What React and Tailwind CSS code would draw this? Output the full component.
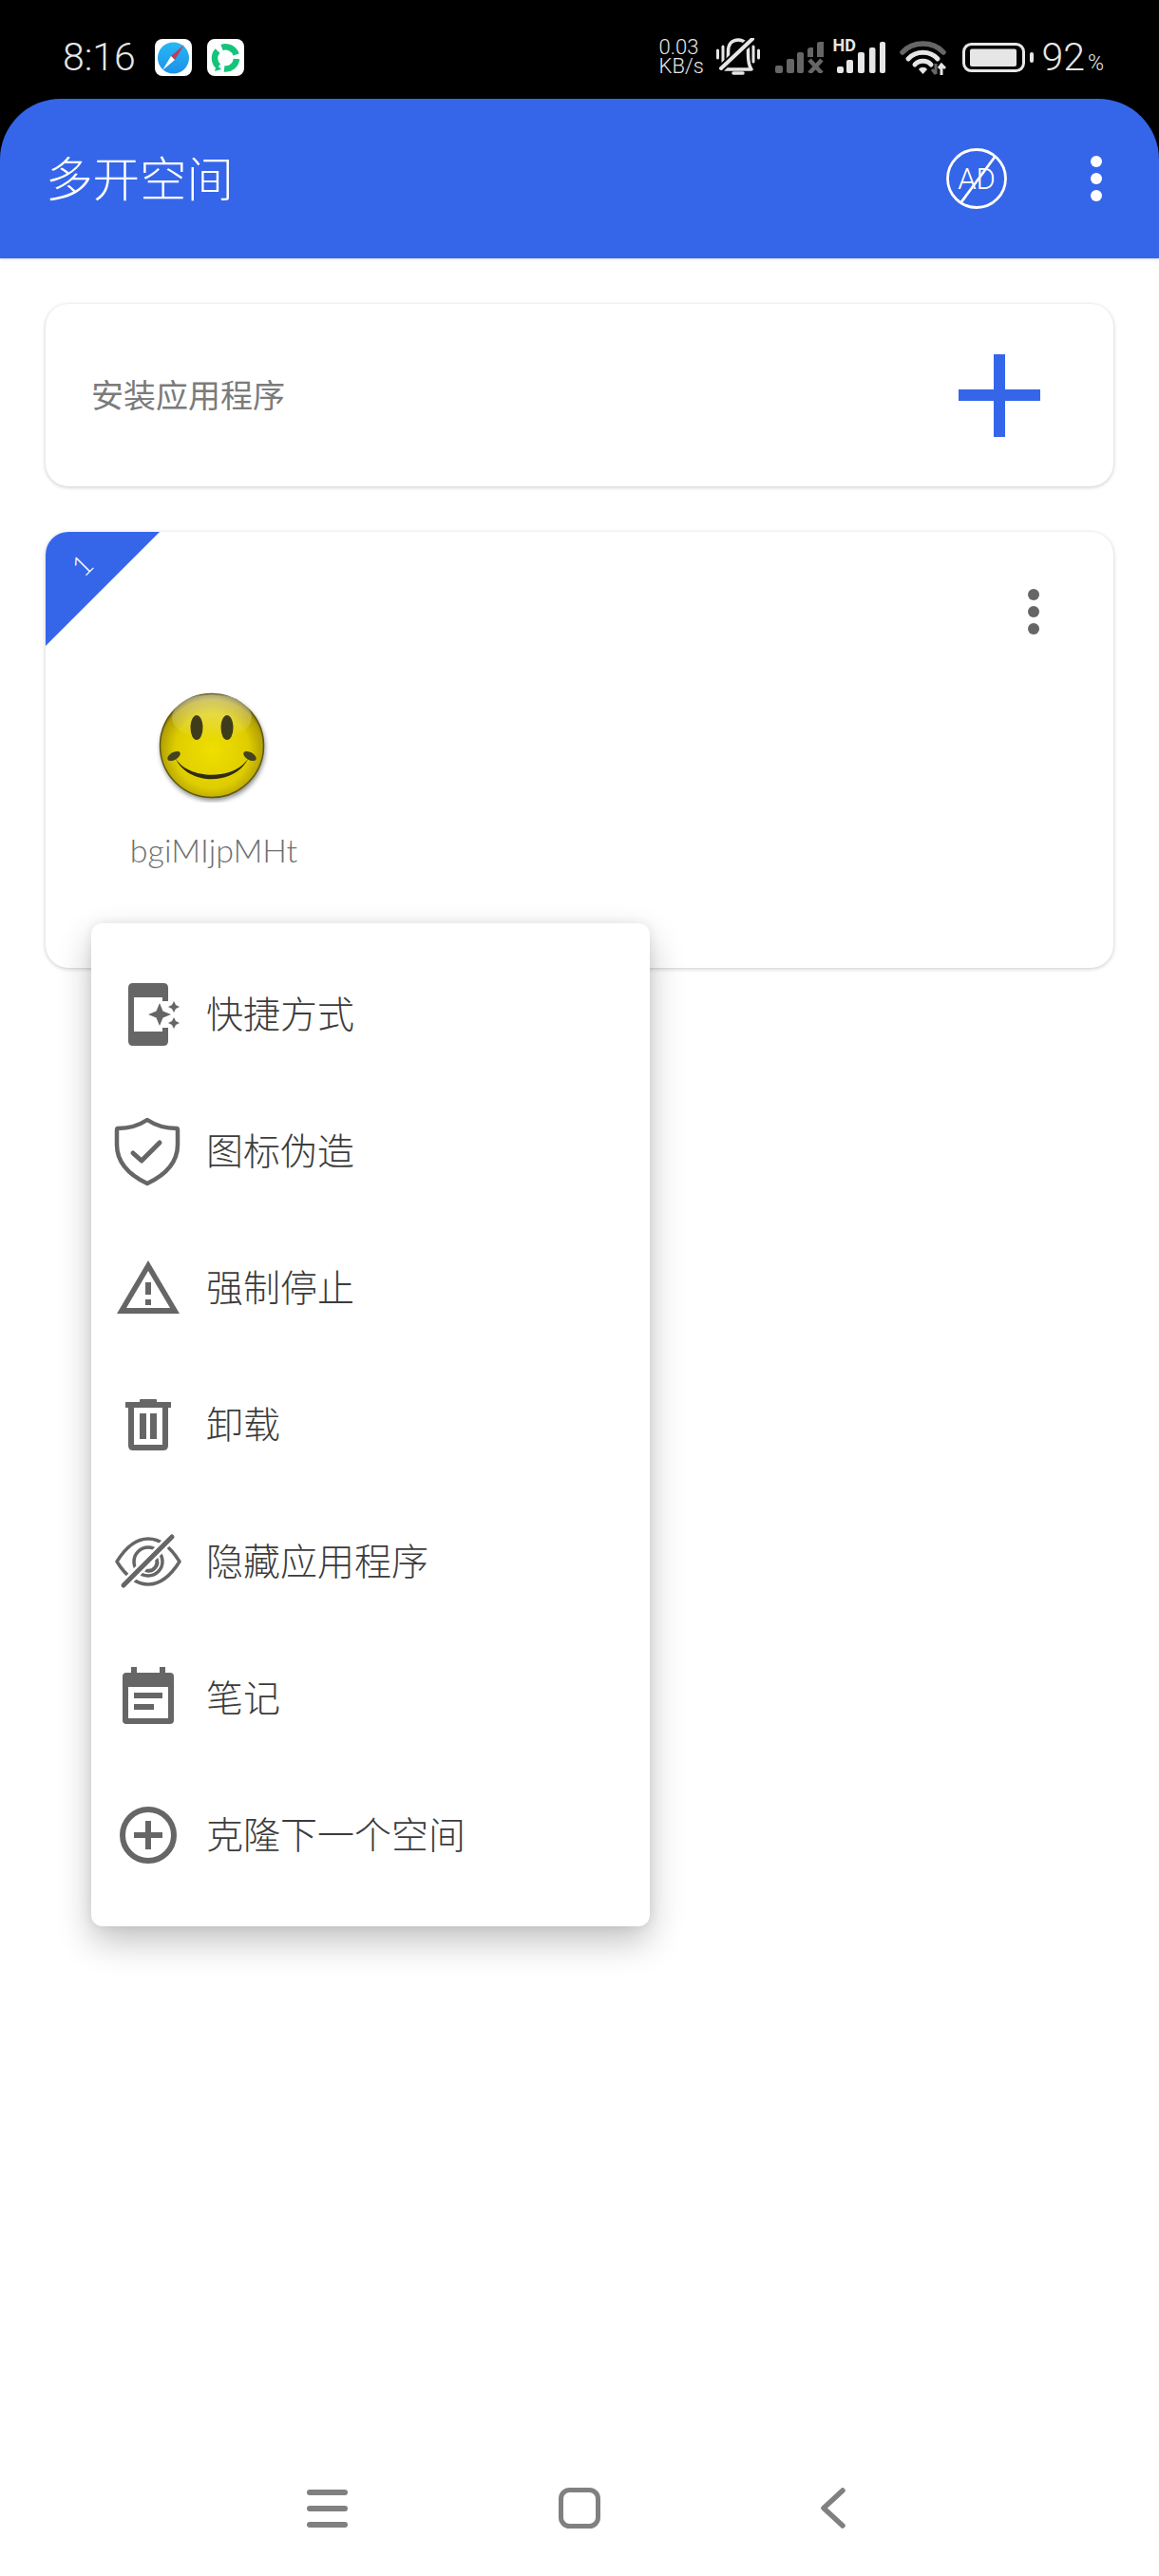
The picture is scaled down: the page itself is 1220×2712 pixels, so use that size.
import React from 'react'

const MENU_GRAY = '#666666'

function Compass() {
  return (
    <svg width="39" height="39" viewBox="0 0 39 39">
      <defs>
        <linearGradient id="sky" x1="0" y1="0" x2="0" y2="1">
          <stop offset="0" stopColor="#27b8f4" />
          <stop offset="1" stopColor="#1e90ea" />
        </linearGradient>
      </defs>
      <rect width="39" height="39" rx="8" fill="#ffffff" />
      <circle cx="19.5" cy="20" r="16.5" fill="url(#sky)" />
      <path d="M31 6 L17 18 L21 22 Z" fill="#c23b5a" />
      <path d="M8 33 L17 18 L21 22 Z" fill="#ffffff" />
    </svg>
  )
}

function GreenSwirl() {
  return (
    <svg width="39" height="39" viewBox="0 0 39 39" fill="none" stroke="#14c47a" strokeWidth="6.5">
      <rect width="39" height="39" rx="8" fill="#ffffff" stroke="none" />
      <path d="M15.5 9 A11.5 11.5 0 0 1 30.5 16.5" />
      <path d="M31 21 A11.5 11.5 0 0 1 18 31.5" />
      <path d="M12 29 A11.5 11.5 0 0 1 11 12.5" />
      <path d="M10 27 L8 34 L15 32 Z" fill="#14c47a" stroke="none" />
    </svg>
  )
}

function MutedBell() {
  return (
    <svg width="48" height="40" viewBox="0 0 48 40" fill="none" stroke="#e6e6e6">
      <path d="M2.5 13 V21 M8 9 V25 M45.5 13 V21 M40 9 V25" strokeWidth="3" strokeLinecap="round" />
      <path d="M10 33 C14 28 13.5 20 13.5 14 C13.5 6 18 2 24 2 C30 2 34.5 6 34.5 14 C34.5 20 34 28 38 33 Z" strokeWidth="3.5" strokeLinejoin="round" />
      <path d="M39 1 L5 33" stroke="#000000" strokeWidth="8" />
      <path d="M39 1 L6 32" strokeWidth="4" strokeLinecap="round" />
      <path d="M19 37 H29" strokeWidth="3.5" strokeLinecap="round" />
    </svg>
  )
}

function NoSimBars() {
  return (
    <svg width="51" height="33" viewBox="0 0 51 33" fill="#666666">
      <rect x="0" y="25" width="8" height="8" rx="2" />
      <rect x="12" y="18" width="8" height="15" rx="2" />
      <rect x="23" y="11" width="7" height="22" rx="2" />
      <path d="M34 9 Q34 6 37 6 H40 V16 H34 Z" />
      <path d="M44 2 Q44 0 47 0 H51 V16 H44 Z" />
      <path d="M36 19 L49 33 M49 19 L36 33" stroke="#666666" strokeWidth="4.5" />
    </svg>
  )
}

function HdBars() {
  return (
    <div className="relative h-[33px] w-[54px]">
      <span className="absolute left-[-1px] top-[-6px] text-[18px] leading-[20px] font-bold text-[#e6e6e6]">HD</span>
      <svg width="54" height="33" viewBox="0 0 54 33" fill="#e6e6e6">
        <rect x="3" y="26" width="7" height="7" rx="2" />
        <rect x="13" y="19" width="7" height="14" rx="2" />
        <rect x="25" y="11" width="7" height="22" rx="2" />
        <rect x="37" y="6" width="6.5" height="27" rx="2" />
        <rect x="48" y="0" width="6" height="33" rx="2" />
      </svg>
    </div>
  )
}

function Wifi() {
  return (
    <svg width="49" height="37" viewBox="0 0 49 37" fill="none">
      <path d="M3 13 C14 1 35 1 46 13" stroke="#666666" strokeWidth="5.5" strokeLinecap="round" />
      <path d="M9 20 C17 11 32 11 40 20" stroke="#e6e6e6" strokeWidth="5" strokeLinecap="round" />
      <path d="M16 26 C20 21 29 21 33 26" stroke="#e6e6e6" strokeWidth="5" strokeLinecap="round" />
      <path d="M20 31 C22 28 27 28 29 31 L24.5 36 Z" fill="#e6e6e6" />
      <path d="M38 25 V36 M34 31 L38 36" stroke="#666666" strokeWidth="3" />
      <path d="M44 37 V27 M41 30 L44 26 L48 30" stroke="#e6e6e6" strokeWidth="3" />
    </svg>
  )
}

function Battery() {
  return (
    <svg width="75" height="31" viewBox="0 0 75 31">
      <rect x="1.5" y="1.5" width="63" height="28" rx="8" fill="none" stroke="#e6e6e6" strokeWidth="3" />
      <rect x="8" y="6.5" width="49" height="18.5" rx="2" fill="#e6e6e6" />
      <rect x="71" y="10" width="4" height="11" rx="2" fill="#e6e6e6" />
    </svg>
  )
}

function StatusBar() {
  return (
    <div className="flex h-[104px] shrink-0 items-start justify-between bg-black pl-[66px] pr-[58px] pt-[40px] text-[#e6e6e6]">
      <div className="flex items-center">
        <span className="w-[97px] text-[41px] leading-[40px] font-light">8:16</span>
        <div className="flex gap-[16px]">
          <Compass />
          <GreenSwirl />
        </div>
      </div>
      <div className="flex items-center">
        <div className="w-[46px] text-[22px] leading-[20px] font-light">
          <div>0.03</div>
          <div>KB/s</div>
        </div>
        <div className="ml-[13px]"><MutedBell /></div>
        <div className="ml-[15px]"><NoSimBars /></div>
        <div className="ml-[11px]"><HdBars /></div>
        <div className="ml-[15px]"><Wifi /></div>
        <div className="ml-[17px]"><Battery /></div>
        <div className="ml-[9px] flex items-baseline font-light">
          <span className="text-[41px] leading-[40px]">92</span>
          <span className="ml-[3px] text-[23px] leading-[24px]">%</span>
        </div>
      </div>
    </div>
  )
}

function VerticalDots({ color }) {
  return (
    <svg width="12" height="48" viewBox="0 0 12 48" fill={color}>
      <circle cx="6" cy="6" r="6" />
      <circle cx="6" cy="24" r="6" />
      <circle cx="6" cy="42" r="6" />
    </svg>
  )
}

function NoAds() {
  return (
    <svg width="64" height="64" viewBox="0 0 64 64" fill="none" stroke="#ffffff">
      <circle cx="32" cy="32" r="30.5" strokeWidth="2.8" />
      <text x="32" y="43" textAnchor="middle" fill="#ffffff" stroke="none" fontSize="31" fontWeight="300" fontFamily="Roboto, sans-serif">AD</text>
      <path d="M52 8 L15 58" strokeWidth="2.8" />
    </svg>
  )
}

function Header() {
  return (
    <div className="bg-black">
      <header className="flex h-[168px] items-center justify-between rounded-t-[64px] bg-[#3566ea] pl-[48px] pr-[60px] shadow-[0_1px_3px_rgba(0,0,0,0.15)]">
        <h1 className="pt-[3px] text-[49.5px] leading-[56px] font-light text-white">多开空间</h1>
        <div className="flex items-center gap-[88px]">
          <NoAds />
          <VerticalDots color="#ffffff" />
        </div>
      </header>
    </div>
  )
}

function Smiley() {
  return (
    <svg width="120" height="120" viewBox="0 0 120 120">
      <defs>
        <radialGradient id="face" cx="0.5" cy="0.55" r="0.55">
          <stop offset="0" stopColor="#efdf00" />
          <stop offset="0.65" stopColor="#dfcd00" />
          <stop offset="0.9" stopColor="#b3a105" />
          <stop offset="1" stopColor="#5f5810" />
        </radialGradient>
        <linearGradient id="gloss" x1="0" y1="0" x2="0" y2="1">
          <stop offset="0" stopColor="#ffffff" stopOpacity="0.45" />
          <stop offset="1" stopColor="#ffffff" stopOpacity="0" />
        </linearGradient>
        <filter id="soft" x="-20%" y="-20%" width="140%" height="140%">
          <feGaussianBlur stdDeviation="2.5" />
        </filter>
      </defs>
      <circle cx="59" cy="63" r="55" fill="#000000" opacity="0.45" filter="url(#soft)" />
      <circle cx="58" cy="60" r="54.5" fill="url(#face)" stroke="#5f5810" strokeWidth="1.5" />
      <ellipse cx="58" cy="30" rx="42" ry="24" fill="url(#gloss)" />
      <ellipse cx="42" cy="41" rx="6.5" ry="13" fill="#3f3c1c" />
      <ellipse cx="74" cy="41" rx="6.5" ry="13" fill="#3f3c1c" />
      <path d="M19 72 C32 103 84 103 97 72 C84 97 32 97 19 72 Z" fill="#2f2c12" />
      <ellipse cx="18" cy="71" rx="7.5" ry="4" fill="#45421f" transform="rotate(-30 18 71)" />
      <ellipse cx="98" cy="71" rx="7.5" ry="4" fill="#45421f" transform="rotate(30 98 71)" />
    </svg>
  )
}

function InstallCard() {
  return (
    <div className="flex h-[192px] items-center justify-between rounded-[24px] bg-white pl-[48px] pr-[77px] shadow-[0_1px_4px_rgba(0,0,0,0.22)]">
      <span className="pt-[2px] text-[34px] leading-[40px] text-[#7b7b7b]">安装应用程序</span>
      <svg width="86" height="87" viewBox="0 0 86 87" fill="#3566ea">
        <rect x="0" y="37" width="86" height="12" />
        <rect x="37" y="0" width="12" height="87" />
      </svg>
    </div>
  )
}

function SpaceCard() {
  return (
    <div className="relative h-[459px] overflow-hidden rounded-[24px] bg-white pt-[60px] shadow-[0_1px_4px_rgba(0,0,0,0.22)]">
      {/* corner ribbon holding the space number */}
      <svg className="absolute left-0 top-0" width="120" height="120" viewBox="0 0 120 120">
        <path d="M0 0 H120 L0 120 Z" fill="#3566ea" />
      </svg>
      <span className="absolute left-[29px] top-[18px] -rotate-45 font-['Lato'] text-[30px] leading-[32px] font-light text-white">1</span>
      <div className="flex justify-end pr-[78px]">
        <VerticalDots color={MENU_GRAY} />
      </div>
      <div className="ml-[89px] mt-[57px] flex w-[176px] flex-col items-center">
        <Smiley />
        <span className="mt-[30px] font-['Lato'] text-[34px] leading-[40px] font-light whitespace-nowrap text-[#6f6f6f]">bgiMIjpMHt</span>
      </div>
    </div>
  )
}

const MENU_ITEMS = [
  {
    label: '快捷方式',
    icon: (
      <>
        <path d="M15 7 Q15 2 20 2 H52 Q57 2 57 7 V21 H51 V17 H21 V53 H51 V49 H57 V63 Q57 68 52 68 H20 Q15 68 15 63 Z" />
        <path d="M48 23 L51.5 31.5 L60 35 L51.5 38.5 L48 47 L44.5 38.5 L36 35 L44.5 31.5 Z" />
        <path d="M63 21 L65 25 L69 27 L65 29 L63 33 L61 29 L57 27 L61 25 Z" />
        <path d="M63 38 L65 42 L69 44 L65 46 L63 50 L61 46 L57 44 L61 42 Z" />
      </>
    ),
  },
  {
    label: '图标伪造',
    icon: (
      <g fill="none" stroke={MENU_GRAY}>
        <path d="M35 2 C44 8 54 11 66 11 Q67 11 67 13 V28 C67 47 54 60 35 69 C16 60 3 47 3 28 V13 Q3 11 4 11 C16 11 26 8 35 2 Z" strokeWidth="4.5" strokeLinejoin="round" />
        <path d="M20 37 L29 45 L48 26" strokeWidth="5" strokeLinecap="round" strokeLinejoin="round" />
      </g>
    ),
  },
  {
    label: '强制停止',
    icon: (
      <>
        <path fillRule="evenodd" d="M36 6 L69 62 H3 Z M36 17 L13 56 H59 Z" />
        <rect x="33" y="29" width="6" height="13" />
        <rect x="33" y="47" width="6" height="6" />
      </>
    ),
  },
  {
    label: '卸载',
    icon: (
      <>
        <rect x="27" y="8" width="18" height="4" rx="1" />
        <rect x="12" y="11" width="48" height="6" />
        <path fillRule="evenodd" d="M15 17 H57 V57 Q57 62 52 62 H20 Q15 62 15 57 Z M21 17 V56 H51 V17 Z" />
        <rect x="27" y="23" width="7" height="27" />
        <rect x="38" y="23" width="7" height="27" />
      </>
    ),
  },
  {
    label: '隐藏应用程序',
    icon: (
      <g fill="none" stroke={MENU_GRAY}>
        <path d="M3 35 Q18 11 36 11 Q54 11 69 35 Q54 59 36 59 Q18 59 3 35 Z" strokeWidth="3.5" strokeLinejoin="round" />
        <circle cx="36" cy="35" r="15" strokeWidth="3.5" />
        <path d="M44 31 A9 9 0 0 1 33 44" strokeWidth="4" />
        <path d="M61 9 L9 61" stroke="#ffffff" strokeWidth="10" />
        <path d="M61 9 L10 60" strokeWidth="5" strokeLinecap="round" />
      </g>
    ),
  },
  {
    label: '笔记',
    icon: (
      <>
        <rect x="18" y="2" width="6" height="8" />
        <rect x="48" y="2" width="6" height="8" />
        <path fillRule="evenodd" d="M13 8 H59 Q63 8 63 12 V58 Q63 62 59 62 H13 Q9 62 9 58 V12 Q9 8 13 8 Z M15 23 V56 H57 V23 Z" />
        <rect x="21" y="29" width="30" height="6" />
        <rect x="21" y="41" width="21" height="6" />
      </>
    ),
  },
  {
    label: '克隆下一个空间',
    icon: (
      <>
        <circle cx="36" cy="35" r="27" fill="none" stroke={MENU_GRAY} strokeWidth="6" />
        <rect x="21" y="32" width="30" height="6" />
        <rect x="33" y="20" width="6" height="30" />
      </>
    ),
  },
]

function ContextMenu() {
  return (
    <div className="absolute left-[96px] top-[972px] w-[588px] rounded-[12px] bg-white pb-[23px] pt-[25px] shadow-[0_16px_36px_rgba(0,0,0,0.24),0_0_12px_rgba(0,0,0,0.08)]">
      {MENU_ITEMS.map((item) => (
        <div key={item.label} className="flex h-[144px] items-center gap-[25px] pl-[24px]">
          <svg width="72" height="72" viewBox="0 0 72 72" fill={MENU_GRAY} className="overflow-visible">
            {item.icon}
          </svg>
          <span className="text-[39px] leading-[48px] font-light text-[#3c3c3c]">{item.label}</span>
        </div>
      ))}
    </div>
  )
}

function NavBar() {
  return (
    <nav className="flex h-[93px] shrink-0 items-start pl-[323px]">
      <svg width="43" height="43" viewBox="0 0 43 43" fill="#808080">
        <rect x="0" y="2" width="43" height="6" rx="3" />
        <rect x="0" y="19" width="43" height="6" rx="3" />
        <rect x="0" y="36" width="43" height="6" rx="3" />
      </svg>
      <svg className="ml-[222px]" width="44" height="43" viewBox="0 0 44 43" fill="none" stroke="#808080">
        <rect x="2.5" y="2.5" width="39" height="38" rx="9" strokeWidth="5" />
      </svg>
      <svg className="ml-[231px]" width="27" height="43" viewBox="0 0 27 43" fill="none" stroke="#808080">
        <path d="M24 3 L4 21.5 L24 40" strokeWidth="5.5" strokeLinecap="round" strokeLinejoin="round" />
      </svg>
    </nav>
  )
}

export default function App() {
  return (
    <div className="relative flex h-[2712px] w-[1220px] flex-col overflow-hidden bg-white font-['Roboto','Noto_Sans_CJK_SC',sans-serif]">
      <StatusBar />
      <Header />
      <main className="flex flex-1 flex-col gap-[48px] px-[48px] pt-[48px]">
        <InstallCard />
        <SpaceCard />
      </main>
      <NavBar />
      <ContextMenu />
    </div>
  )
}
